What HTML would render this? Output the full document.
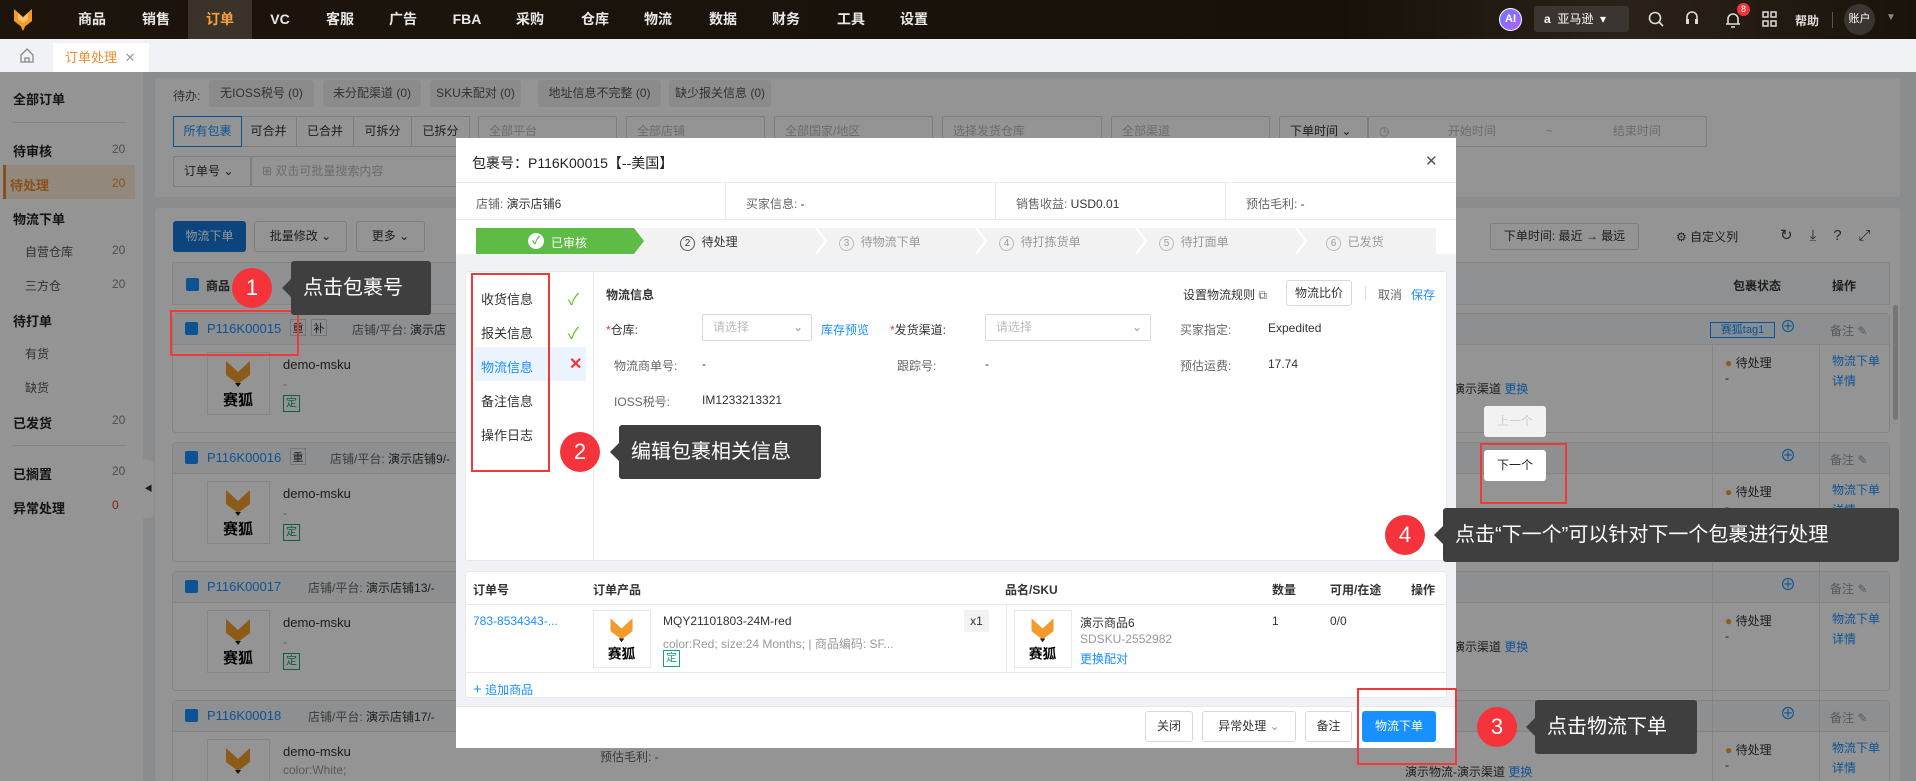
<!DOCTYPE html>
<html><head><meta charset="utf-8">
<style>
*{box-sizing:border-box;margin:0;padding:0}
html,body{width:1916px;height:781px;overflow:hidden}
body{font-family:"Liberation Sans","Noto Sans CJK SC",sans-serif;font-size:12px;color:#333;background:#f0f2f5}
#w{position:relative;width:1916px;height:781px;overflow:hidden;background:#f0f2f5}
.a{position:absolute}
.nav{left:0;top:0;width:1916px;height:39px;background:linear-gradient(90deg,#1d150c,#17110a 70%,#2a2218 85%,#1a130b)}
.nav .m{top:0;height:39px;line-height:39px;color:#e8e8e8;font-size:14px;font-weight:bold;transform:translateX(-50%)}
.tabs{left:0;top:39px;width:1916px;height:33px;background:#f0f2f5}
.side{left:0;top:72px;width:143px;height:709px;background:#fff}
.side .i{left:13px;font-size:13px;font-weight:bold;color:#222}
.side .s{left:25px;font-size:12px;color:#555}
.side .n{left:112px;font-size:12px;color:#888}
.card{background:#fff;border-radius:3px}
.tag{background:#f0f0f0;border-radius:3px;height:27px;line-height:27px;text-align:center;color:#555;font-size:12px}
.sel{border:1px solid #d9d9d9;background:#fff;height:31px;line-height:29px;padding-left:10px;color:#bbb;border-radius:2px}
.btn{border:1px solid #d9d9d9;background:#fff;border-radius:3px;text-align:center;color:#333}
.grp{left:172px;width:1718px;border:1px solid #e6e6e6;border-radius:4px;background:#fff}
.gh{height:31px;background:#f5f6f8;border-bottom:1px solid #e6e6e6}
.ov{left:0;top:72px;width:1916px;height:709px;background:rgba(0,0,0,.42)}
.modal{left:456px;top:138px;width:1000px;height:610px;background:#f0f2f5}
.blue{color:#1890ff}
.lbl{color:#666}
.circ{width:40px;height:40px;border-radius:50%;background:#f5333a;color:#fff;font-size:22px;text-align:center;line-height:40px}
.tip{background:#3f3f3f;color:#fff;border-radius:3px;font-size:20px}
.tip:before{content:"";position:absolute;left:-9px;top:50%;margin-top:-9px;border:9px solid transparent;border-left:0;border-right-color:#3f3f3f}
.rb{border:2px solid #f03a3a}
.ding{border:1px solid #19a07a;color:#19a07a;font-size:11px;width:17px;height:17px;line-height:15px;text-align:center}
</style></head><body><div id="w">

<!-- NAV -->
<div class="a nav">
 <svg class="a" style="left:13px;top:8px" width="20" height="23" viewBox="0 0 20 23"><polygon points="1,1 10,9 19,1 19,13 10,20 1,13" fill="#f29b2b"/><polygon points="5,5 10,10 15,5 15,11 10,15 5,11" fill="#f7c270"/><polygon points="8,19 12,19 10,23" fill="#f29b2b"/></svg>
 <div class="a" style="left:188px;top:0;width:64px;height:39px;background:#3b332a"></div>
 <div class="a m" style="left:92px">商品</div><div class="a m" style="left:156px">销售</div><div class="a m" style="left:220px;color:#f7a23b">订单</div><div class="a m" style="left:280px">VC</div><div class="a m" style="left:340px">客服</div><div class="a m" style="left:403px">广告</div><div class="a m" style="left:467px">FBA</div><div class="a m" style="left:530px">采购</div><div class="a m" style="left:595px">仓库</div><div class="a m" style="left:658px">物流</div><div class="a m" style="left:723px">数据</div><div class="a m" style="left:786px">财务</div><div class="a m" style="left:851px">工具</div><div class="a m" style="left:914px">设置</div>
 <div class="a" style="left:1499px;top:8px;width:23px;height:23px;border-radius:50%;background:linear-gradient(135deg,#6a7bff,#b45cff);color:#fff;font-size:11px;font-weight:bold;text-align:center;line-height:21px;border:1px solid #fff">AI</div>
 <div class="a" style="left:1534px;top:6px;width:95px;height:26px;background:#3a3530;border-radius:3px;color:#fff;font-size:12px;line-height:26px;padding-left:10px"><b>a</b>&nbsp;&nbsp;亚马逊&nbsp;&nbsp;▾</div>
 <svg class="a" style="left:1648px;top:11px" width="16" height="16" viewBox="0 0 16 16"><circle cx="7" cy="7" r="5.5" stroke="#ddd" stroke-width="1.6" fill="none"/><line x1="11" y1="11" x2="15" y2="15" stroke="#ddd" stroke-width="1.6"/></svg>
 <svg class="a" style="left:1684px;top:10px" width="16" height="18" viewBox="0 0 16 18"><path d="M3 11V7a5 5 0 0 1 10 0v4" stroke="#ddd" stroke-width="1.6" fill="none"/><rect x="2" y="9" width="3" height="5" fill="#ddd"/><rect x="11" y="9" width="3" height="5" fill="#ddd"/></svg>
 <svg class="a" style="left:1725px;top:11px" width="16" height="18" viewBox="0 0 16 18"><path d="M3 13V8a5 5 0 0 1 10 0v5zM1 13h14M6 16h4" stroke="#ddd" stroke-width="1.6" fill="none"/></svg>
 <div class="a" style="left:1737px;top:3px;width:13px;height:13px;border-radius:50%;background:#f5333a;color:#fff;font-size:9px;text-align:center;line-height:13px">8</div>
 <svg class="a" style="left:1762px;top:11px" width="15" height="16" viewBox="0 0 15 16"><g stroke="#ddd" stroke-width="1.5" fill="none"><rect x="1" y="1" width="5" height="5"/><rect x="9" y="1" width="5" height="5"/><rect x="1" y="10" width="5" height="5"/><rect x="9" y="10" width="5" height="5"/></g></svg>
 <div class="a" style="left:1795px;top:12px;color:#ddd;font-size:12px;font-weight:bold">帮助</div>
 <div class="a" style="left:1832px;top:12px;width:1px;height:16px;background:#555"></div>
 <div class="a" style="left:1844px;top:4px;width:31px;height:31px;border-radius:50%;background:#3a3530;color:#fff;font-size:11px;text-align:center;line-height:31px">账户</div>
 <div class="a" style="left:1886px;top:12px;color:#888;font-size:10px">▼</div>
</div>

<!-- TABS -->
<div class="a tabs">
 <svg class="a" style="left:20px;top:9px" width="14" height="15" viewBox="0 0 14 15"><path d="M1 7L7 1l6 6v7H1z M5 14v-4h4v4" stroke="#888" stroke-width="1.3" fill="none"/></svg>
 <div class="a" style="left:53px;top:4px;width:96px;height:29px;background:#fff;color:#f08c2e;font-size:13px;line-height:29px;padding-left:12px">订单处理 <span style="color:#999;margin-left:4px">✕</span></div>
</div>

<!-- PAGE BELOW -->
<div class="a side">
 <div class="a i" style="top:17px">全部订单</div>
 <div class="a" style="left:13px;top:50px;width:113px;height:1px;background:#e5e5e5"></div>
 <div class="a i" style="top:69px">待审核</div><div class="a n" style="top:70px">20</div>
 <div class="a" style="left:3px;top:93px;width:132px;height:34px;background:#fdebd6;border-left:3px solid #f08c2e"></div>
 <div class="a i" style="top:103px;color:#f08c2e;left:10px">待处理</div><div class="a n" style="top:104px;color:#f08c2e">20</div>
 <div class="a i" style="top:137px">物流下单</div>
 <div class="a s" style="top:171px">自营仓库</div><div class="a n" style="top:171px">20</div>
 <div class="a s" style="top:205px">三方仓</div><div class="a n" style="top:205px">20</div>
 <div class="a i" style="top:239px">待打单</div>
 <div class="a s" style="top:273px">有货</div>
 <div class="a s" style="top:307px">缺货</div>
 <div class="a i" style="top:341px">已发货</div><div class="a n" style="top:341px">20</div>
 <div class="a" style="left:13px;top:373px;width:113px;height:1px;background:#e5e5e5"></div>
 <div class="a i" style="top:392px">已搁置</div><div class="a n" style="top:392px">20</div>
 <div class="a i" style="top:426px">异常处理</div><div class="a n" style="top:426px;color:#e33">0</div>
</div>
<div class="a" style="left:143px;top:460px;width:11px;height:58px;background:#fff;border-radius:0 6px 6px 0;font-size:8px;color:#333;line-height:58px;text-align:center">◀</div>

<div class="a card" style="left:155px;top:78px;width:1745px;height:119px"></div>
<div class="a" style="left:173px;top:87px;font-size:12px;color:#555">待办:</div>
<div class="a tag" style="left:209px;top:80px;width:105px">无IOSS税号 (0)</div>
<div class="a tag" style="left:323px;top:80px;width:98px">未分配渠道 (0)</div>
<div class="a tag" style="left:430px;top:80px;width:91px">SKU未配对 (0)</div>
<div class="a tag" style="left:538px;top:80px;width:123px">地址信息不完整 (0)</div>
<div class="a tag" style="left:669px;top:80px;width:102px">缺少报关信息 (0)</div>
<div class="a" style="left:173px;top:116px;width:297px;height:31px;border:1px solid #d9d9d9;background:#fff;display:flex;line-height:29px;text-align:center">
 <div style="width:69px;border:1px solid #1890ff;color:#1890ff;margin:-1px">所有包裹</div><div style="width:56px;border-right:1px solid #d9d9d9">可合并</div><div style="width:57px;border-right:1px solid #d9d9d9">已合并</div><div style="width:58px;border-right:1px solid #d9d9d9">可拆分</div><div style="width:57px">已拆分</div></div>
<div class="a sel" style="left:478px;top:116px;width:139px">全部平台</div>
<div class="a sel" style="left:626px;top:116px;width:139px">全部店铺</div>
<div class="a sel" style="left:774px;top:116px;width:159px">全部国家/地区</div>
<div class="a sel" style="left:942px;top:116px;width:160px">选择发货仓库</div>
<div class="a sel" style="left:1111px;top:116px;width:159px">全部渠道</div>
<div class="a sel" style="left:1279px;top:116px;width:89px;color:#333">下单时间 ⌄</div>
<div class="a sel" style="left:1368px;top:116px;width:339px">◷ <span style="margin-left:55px">开始时间</span><span style="margin-left:50px">~</span><span style="margin-left:60px">结束时间</span></div>
<div class="a sel" style="left:173px;top:156px;width:78px;color:#333">订单号 ⌄</div>
<div class="a sel" style="left:251px;top:156px;width:220px">⊞ 双击可批量搜索内容</div>

<div class="a card" style="left:155px;top:208px;width:1745px;height:573px"></div>
<div class="a" style="left:173px;top:221px;width:73px;height:31px;background:#1677d8;color:#fff;border-radius:3px;text-align:center;line-height:31px">物流下单</div>
<div class="a btn" style="left:254px;top:221px;width:93px;height:31px;line-height:29px">批量修改 ⌄</div>
<div class="a btn" style="left:356px;top:221px;width:69px;height:31px;line-height:29px">更多 ⌄</div>
<div class="a btn" style="left:1490px;top:223px;width:149px;height:27px;line-height:25px">下单时间: 最近 → 最远</div>
<div class="a" style="left:1676px;top:228px">⚙ 自定义列</div>
<div class="a" style="left:1780px;top:226px;font-size:15px;letter-spacing:17px;color:#444">↻⤓?⤢</div>
<div class="a" style="left:172px;top:262px;width:1718px;height:43px;background:#f7f8fa;border:1px solid #e6e6e6"></div>
<div class="a" style="left:186px;top:278px;width:13px;height:13px;background:#1890ff;border-radius:2px"></div>
<div class="a" style="left:206px;top:277px;font-weight:bold">商品</div>
<div class="a" style="left:1733px;top:277px;font-weight:bold">包裹状态</div>
<div class="a" style="left:1832px;top:277px;font-weight:bold">操作</div>

<div class="a grp" style="top:313px;height:120px"><div class="gh"></div></div>
<div class="a grp" style="top:442px;height:120px"><div class="gh"></div></div>
<div class="a grp" style="top:571px;height:120px"><div class="gh"></div></div>
<div class="a grp" style="top:700px;height:90px"><div class="gh"></div></div>
<div class="a" style="left:1893px;top:305px;width:5px;height:115px;background:#ccc;border-radius:3px"></div>

<div class="a" style="left:185px;top:322px;width:13px;height:13px;background:#1890ff;border-radius:2px"></div>
<div class="a blue" style="left:207px;top:321px;font-size:13px">P116K00015</div>
<div class="a" style="left:290px;top:319px;border:1px solid #ccc;width:16px;height:17px;font-size:11px;text-align:center">重</div>
<div class="a" style="left:311px;top:319px;border:1px solid #ccc;width:16px;height:17px;font-size:11px;text-align:center">补</div>
<div class="a lbl" style="left:352px;top:321px">店铺/平台: <span style="color:#333">演示店</span></div>

<div class="a" style="left:185px;top:451px;width:13px;height:13px;background:#1890ff;border-radius:2px"></div>
<div class="a blue" style="left:207px;top:450px;font-size:13px">P116K00016</div>
<div class="a" style="left:290px;top:448px;border:1px solid #ccc;width:16px;height:17px;font-size:11px;text-align:center">重</div>
<div class="a lbl" style="left:330px;top:450px">店铺/平台: <span style="color:#333">演示店铺9/-</span></div>

<div class="a" style="left:185px;top:580px;width:13px;height:13px;background:#1890ff;border-radius:2px"></div>
<div class="a blue" style="left:207px;top:579px;font-size:13px">P116K00017</div>
<div class="a lbl" style="left:308px;top:579px">店铺/平台: <span style="color:#333">演示店铺13/-</span></div>
<div class="a" style="left:185px;top:709px;width:13px;height:13px;background:#1890ff;border-radius:2px"></div>
<div class="a blue" style="left:207px;top:708px;font-size:13px">P116K00018</div>
<div class="a lbl" style="left:308px;top:708px">店铺/平台: <span style="color:#333">演示店铺17/-</span></div>

<div class="a" style="left:207px;top:352px;width:63px;height:63px;border:1px solid #e5e5e5;background:#fff"><svg width="61" height="61" viewBox="0 0 61 61"><polygon points="18,8 30,19 42,8 42,22 30,31 18,22" fill="#f29b2b"/><polygon points="27,30 33,30 30,34" fill="#222"/><text x="30" y="52" font-size="15" font-weight="bold" text-anchor="middle" font-family="Noto Sans CJK SC">赛狐</text></svg></div>
<div class="a" style="left:283px;top:357px;font-size:13px">demo-msku</div><div class="a" style="left:283px;top:377px;color:#999">-</div><div class="a ding" style="left:283px;top:395px">定</div>
<div class="a" style="left:207px;top:481px;width:63px;height:63px;border:1px solid #e5e5e5;background:#fff"><svg width="61" height="61" viewBox="0 0 61 61"><polygon points="18,8 30,19 42,8 42,22 30,31 18,22" fill="#f29b2b"/><polygon points="27,30 33,30 30,34" fill="#222"/><text x="30" y="52" font-size="15" font-weight="bold" text-anchor="middle" font-family="Noto Sans CJK SC">赛狐</text></svg></div>
<div class="a" style="left:283px;top:486px;font-size:13px">demo-msku</div><div class="a" style="left:283px;top:506px;color:#999">-</div><div class="a ding" style="left:283px;top:524px">定</div>
<div class="a" style="left:207px;top:610px;width:63px;height:63px;border:1px solid #e5e5e5;background:#fff"><svg width="61" height="61" viewBox="0 0 61 61"><polygon points="18,8 30,19 42,8 42,22 30,31 18,22" fill="#f29b2b"/><polygon points="27,30 33,30 30,34" fill="#222"/><text x="30" y="52" font-size="15" font-weight="bold" text-anchor="middle" font-family="Noto Sans CJK SC">赛狐</text></svg></div>
<div class="a" style="left:283px;top:615px;font-size:13px">demo-msku</div><div class="a" style="left:283px;top:635px;color:#999">-</div><div class="a ding" style="left:283px;top:653px">定</div>
<div class="a" style="left:207px;top:739px;width:63px;height:42px;border:1px solid #e5e5e5;border-bottom:0;background:#fff;overflow:hidden"><svg width="61" height="61" viewBox="0 0 61 61"><polygon points="18,8 30,19 42,8 42,22 30,31 18,22" fill="#f29b2b"/><polygon points="27,30 33,30 30,34" fill="#222"/></svg></div>
<div class="a" style="left:283px;top:744px;font-size:13px">demo-msku</div><div class="a" style="left:283px;top:763px;color:#999">color:White;</div>
<div class="a" style="left:600px;top:748px;color:#666">预估毛利: -</div>
<div class="a" style="left:1405px;top:763px">演示物流-演示渠道 <span class="blue">更换</span></div>

<div class="a" style="left:1710px;top:322px;width:65px;height:16px;border:1px solid #1890ff;color:#1890ff;font-size:11px;text-align:center;line-height:14px;background:#e6f4ff">赛狐tag1</div>
<div class="a" style="left:1449px;top:380px">-演示渠道 <span class="blue">更换</span></div>
<div class="a" style="left:1449px;top:509px">-演示渠道 <span class="blue">更换</span></div>
<div class="a" style="left:1449px;top:638px">-演示渠道 <span class="blue">更换</span></div>
<div class="a" style="left:1712px;top:344px;width:1px;height:437px;background:#e6e6e6"></div>
<div class="a" style="left:1819px;top:344px;width:1px;height:437px;background:#e6e6e6"></div>
<div class="a" style="left:1780px;top:320px;font-size:16px;color:#1890ff;line-height:1">⊕</div><div class="a" style="left:1830px;top:322px;color:#999">备注 ✎</div>
<div class="a" style="left:1780px;top:449px;font-size:16px;color:#1890ff;line-height:1">⊕</div><div class="a" style="left:1830px;top:451px;color:#999">备注 ✎</div>
<div class="a" style="left:1780px;top:578px;font-size:16px;color:#1890ff;line-height:1">⊕</div><div class="a" style="left:1830px;top:580px;color:#999">备注 ✎</div>
<div class="a" style="left:1780px;top:707px;font-size:16px;color:#1890ff;line-height:1">⊕</div><div class="a" style="left:1830px;top:709px;color:#999">备注 ✎</div>
<div class="a" style="left:1725px;top:354px"><span style="color:#f0a030">●</span> 待处理<br>-</div>
<div class="a" style="left:1725px;top:483px"><span style="color:#f0a030">●</span> 待处理<br>-</div>
<div class="a" style="left:1725px;top:612px"><span style="color:#f0a030">●</span> 待处理<br>-</div>
<div class="a" style="left:1725px;top:741px"><span style="color:#f0a030">●</span> 待处理<br>-</div>
<div class="a blue" style="left:1832px;top:351px;line-height:20px">物流下单<br>详情</div>
<div class="a blue" style="left:1832px;top:480px;line-height:20px">物流下单<br>详情</div>
<div class="a blue" style="left:1832px;top:609px;line-height:20px">物流下单<br>详情</div>
<div class="a blue" style="left:1832px;top:738px;line-height:20px">物流下单<br>详情</div>

<!-- OVERLAY -->
<div class="a ov"></div>

<!-- MODAL -->
<div class="a modal">
 <div class="a" style="left:0;top:0;width:1000px;height:45px;background:#fff;border-bottom:1px solid #e8e8e8"></div>
 <div class="a" style="left:16px;top:15px;font-size:14px;color:#222">包裹号：P116K00015【--美国】</div>
 <div class="a" style="left:969px;top:14px;font-size:15px;color:#555">✕</div>
 <div class="a" style="left:0;top:45px;width:1000px;height:37px;background:#fff;border-bottom:1px solid #e8e8e8"></div>
 <div class="a" style="left:20px;top:57px"><span class="lbl">店铺: </span>演示店铺6</div>
 <div class="a" style="left:269px;top:45px;width:1px;height:37px;background:#e8e8e8"></div>
 <div class="a" style="left:290px;top:57px"><span class="lbl">买家信息: </span>-</div>
 <div class="a" style="left:539px;top:45px;width:1px;height:37px;background:#e8e8e8"></div>
 <div class="a" style="left:560px;top:57px"><span class="lbl">销售收益: </span>USD0.01</div>
 <div class="a" style="left:769px;top:45px;width:1px;height:37px;background:#e8e8e8"></div>
 <div class="a" style="left:790px;top:57px"><span class="lbl">预估毛利: </span>-</div>
 <div class="a" style="left:0;top:82px;width:1000px;height:34px;background:#fff"></div>
 <div class="a" style="left:20px;top:90px;width:960px;height:26px;background:#f2f2f2"></div>
 <div class="a" style="left:20px;top:90px;width:168px;height:26px;background:#5dbb46;clip-path:polygon(0 0,94% 0,100% 50%,94% 100%,0 100%)"></div>
 <div class="a" style="left:72px;top:95px;width:16px;height:16px;border-radius:50%;background:#fff;color:#5dbb46;font-size:11px;text-align:center;line-height:16px;font-weight:bold">✓</div>
 <div class="a" style="left:95px;top:96px;color:#fff">已审核</div>
 <svg class="a" style="left:180px;top:90px" width="800" height="26"><g stroke="#fff" stroke-width="2.5" fill="none"><polyline points="180,0 190,13 180,26"/><polyline points="340,0 350,13 340,26"/><polyline points="500,0 510,13 500,26"/><polyline points="660,0 670,13 660,26"/></g></svg>
 <div class="a" style="left:224px;top:95px;white-space:nowrap"><span style="display:inline-block;width:15px;height:15px;border:1px solid #555;border-radius:50%;text-align:center;line-height:13px;font-size:10px">2</span>&nbsp; 待处理</div>
 <div class="a" style="left:383px;top:95px;white-space:nowrap;color:#999"><span style="display:inline-block;width:15px;height:15px;border:1px solid #bbb;border-radius:50%;text-align:center;line-height:13px;font-size:10px">3</span>&nbsp; 待物流下单</div>
 <div class="a" style="left:543px;top:95px;white-space:nowrap;color:#999"><span style="display:inline-block;width:15px;height:15px;border:1px solid #bbb;border-radius:50%;text-align:center;line-height:13px;font-size:10px">4</span>&nbsp; 待打拣货单</div>
 <div class="a" style="left:703px;top:95px;white-space:nowrap;color:#999"><span style="display:inline-block;width:15px;height:15px;border:1px solid #bbb;border-radius:50%;text-align:center;line-height:13px;font-size:10px">5</span>&nbsp; 待打面单</div>
 <div class="a" style="left:870px;top:95px;white-space:nowrap;color:#999"><span style="display:inline-block;width:15px;height:15px;border:1px solid #bbb;border-radius:50%;text-align:center;line-height:13px;font-size:10px">6</span>&nbsp; 已发货</div>

 <div class="a" style="left:9px;top:133px;width:982px;height:290px;background:#fff;border:1px solid #e8e8e8;border-radius:3px"></div>
 <div class="a" style="left:137px;top:133px;width:1px;height:290px;background:#e8e8e8"></div>
 <div class="a" style="left:18px;top:209px;width:112px;height:34px;background:#eaf3fe"></div>
 <div class="a" style="left:25px;top:151px;font-size:13px">收货信息</div><div class="a" style="left:112px;top:148px;color:#52c41a;font-size:16px">✓</div>
 <div class="a" style="left:25px;top:185px;font-size:13px">报关信息</div><div class="a" style="left:112px;top:182px;color:#52c41a;font-size:16px">✓</div>
 <div class="a blue" style="left:25px;top:219px;font-size:13px">物流信息</div><div class="a" style="left:113px;top:216px;color:#f5333a;font-size:16px;font-weight:bold">✕</div>
 <div class="a" style="left:25px;top:253px;font-size:13px">备注信息</div>
 <div class="a" style="left:25px;top:287px;font-size:13px">操作日志</div>
 <div class="a" style="left:150px;top:148px;font-weight:bold">物流信息</div>
 <div class="a" style="left:727px;top:148px">设置物流规则 <span style="color:#666">⧉</span></div>
 <div class="a btn" style="left:830px;top:142px;width:66px;height:26px;line-height:24px">物流比价</div>
 <div class="a" style="left:909px;top:148px;width:1px;height:14px;background:#ddd"></div>
 <div class="a" style="left:922px;top:148px;color:#666">取消</div><div class="a blue" style="left:955px;top:148px">保存</div>
 <div class="a" style="left:150px;top:183px"><span style="color:#f5333a">*</span>仓库:</div>
 <div class="a sel" style="left:246px;top:176px;width:110px;height:27px;line-height:25px;font-size:12px">请选择<span style="position:absolute;right:8px;color:#999">⌄</span></div>
 <div class="a blue" style="left:365px;top:183px">库存预览</div>
 <div class="a" style="left:434px;top:183px"><span style="color:#f5333a">*</span>发货渠道:</div>
 <div class="a sel" style="left:529px;top:176px;width:166px;height:27px;line-height:25px">请选择<span style="position:absolute;right:8px;color:#999">⌄</span></div>
 <div class="a lbl" style="left:724px;top:183px">买家指定:</div><div class="a" style="left:812px;top:183px">Expedited</div>
 <div class="a lbl" style="left:158px;top:219px">物流商单号:</div><div class="a" style="left:246px;top:219px">-</div>
 <div class="a lbl" style="left:441px;top:219px">跟踪号:</div><div class="a" style="left:529px;top:219px">-</div>
 <div class="a lbl" style="left:724px;top:219px">预估运费:</div><div class="a" style="left:812px;top:219px">17.74</div>
 <div class="a lbl" style="left:158px;top:255px">IOSS税号:</div><div class="a" style="left:246px;top:255px">IM1233213321</div>

 <div class="a" style="left:9px;top:433px;width:982px;height:127px;background:#fff;border:1px solid #e8e8e8;border-radius:3px"></div>
 <div class="a" style="left:9px;top:466px;width:982px;height:1px;background:#e8e8e8"></div>
 <div class="a" style="left:17px;top:443px;font-weight:bold">订单号</div>
 <div class="a" style="left:137px;top:443px;font-weight:bold">订单产品</div>
 <div class="a" style="left:549px;top:443px;font-weight:bold">品名/SKU</div>
 <div class="a" style="left:816px;top:443px;font-weight:bold">数量</div>
 <div class="a" style="left:874px;top:443px;font-weight:bold">可用/在途</div>
 <div class="a" style="left:955px;top:443px;font-weight:bold">操作</div>
 <div class="a blue" style="left:17px;top:476px">783-8534343-...</div>
 <div class="a" style="left:137px;top:472px;width:58px;height:58px;border:1px solid #e8e8e8"><svg width="56" height="56" viewBox="0 0 61 61"><polygon points="18,8 30,19 42,8 42,22 30,31 18,22" fill="#f29b2b"/><polygon points="27,30 33,30 30,34" fill="#222"/><text x="30" y="52" font-size="15" font-weight="bold" text-anchor="middle" font-family="Noto Sans CJK SC">赛狐</text></svg></div>
 <div class="a" style="left:207px;top:476px">MQY21101803-24M-red</div>
 <div class="a" style="left:207px;top:497px;color:#999">color:Red; size:24 Months; | 商品编码: SF...</div>
 <div class="a ding" style="left:207px;top:512px">定</div>
 <div class="a" style="left:508px;top:472px;width:25px;height:22px;background:#f2f2f2;text-align:center;line-height:22px">x1</div>
 <div class="a" style="left:550px;top:466px;width:1px;height:68px;background:#e8e8e8"></div>
 <div class="a" style="left:558px;top:472px;width:58px;height:58px;border:1px solid #e8e8e8"><svg width="56" height="56" viewBox="0 0 61 61"><polygon points="18,8 30,19 42,8 42,22 30,31 18,22" fill="#f29b2b"/><polygon points="27,30 33,30 30,34" fill="#222"/><text x="30" y="52" font-size="15" font-weight="bold" text-anchor="middle" font-family="Noto Sans CJK SC">赛狐</text></svg></div>
 <div class="a" style="left:624px;top:476px">演示商品6</div>
 <div class="a" style="left:624px;top:494px;color:#999">SDSKU-2552982</div>
 <div class="a blue" style="left:624px;top:512px">更换配对</div>
 <div class="a" style="left:816px;top:476px">1</div><div class="a" style="left:874px;top:476px">0/0</div>
 <div class="a" style="left:9px;top:534px;width:982px;height:1px;background:#e8e8e8"></div>
 <div class="a blue" style="left:17px;top:543px"><span style="font-size:15px">+</span> 追加商品</div>

 <div class="a" style="left:0;top:568px;width:1000px;height:42px;background:#fff;border-top:1px solid #e8e8e8"></div>
 <div class="a btn" style="left:689px;top:573px;width:48px;height:31px;line-height:29px">关闭</div>
 <div class="a btn" style="left:746px;top:573px;width:94px;height:31px;line-height:29px">异常处理 <span style="color:#999">⌄</span></div>
 <div class="a btn" style="left:849px;top:573px;width:47px;height:31px;line-height:29px">备注</div>
 <div class="a" style="left:906px;top:573px;width:74px;height:31px;line-height:31px;background:#1890ff;color:#fff;border-radius:3px;text-align:center">物流下单</div>
</div>

<div class="a" style="left:1484px;top:406px;width:62px;height:31px;background:#f2f2f2;border-radius:3px;color:#ccc;text-align:center;line-height:31px">上一个</div>
<div class="a" style="left:1484px;top:450px;width:62px;height:31px;background:#fff;border-radius:3px;color:#222;text-align:center;line-height:31px">下一个</div>

<div class="a rb" style="left:170px;top:310px;width:129px;height:46px"></div>
<div class="a rb" style="left:471px;top:273px;width:79px;height:199px"></div>
<div class="a rb" style="left:1480px;top:443px;width:87px;height:61px"></div>
<div class="a rb" style="left:1357px;top:688px;width:100px;height:77px"></div>

<div class="a circ" style="left:232px;top:268px">1</div>
<div class="a tip" style="left:291px;top:261px;width:140px;height:54px;line-height:54px;padding-left:12px">点击包裹号</div>
<div class="a circ" style="left:560px;top:432px">2</div>
<div class="a tip" style="left:619px;top:425px;width:202px;height:54px;line-height:54px;padding-left:12px">编辑包裹相关信息</div>
<div class="a circ" style="left:1477px;top:707px">3</div>
<div class="a tip" style="left:1535px;top:700px;width:162px;height:54px;line-height:54px;padding-left:12px">点击物流下单</div>
<div class="a circ" style="left:1385px;top:515px">4</div>
<div class="a tip" style="left:1443px;top:508px;width:456px;height:54px;line-height:54px;padding-left:12px">点击“下一个”可以针对下一个包裹进行处理</div>
</div></body></html>
